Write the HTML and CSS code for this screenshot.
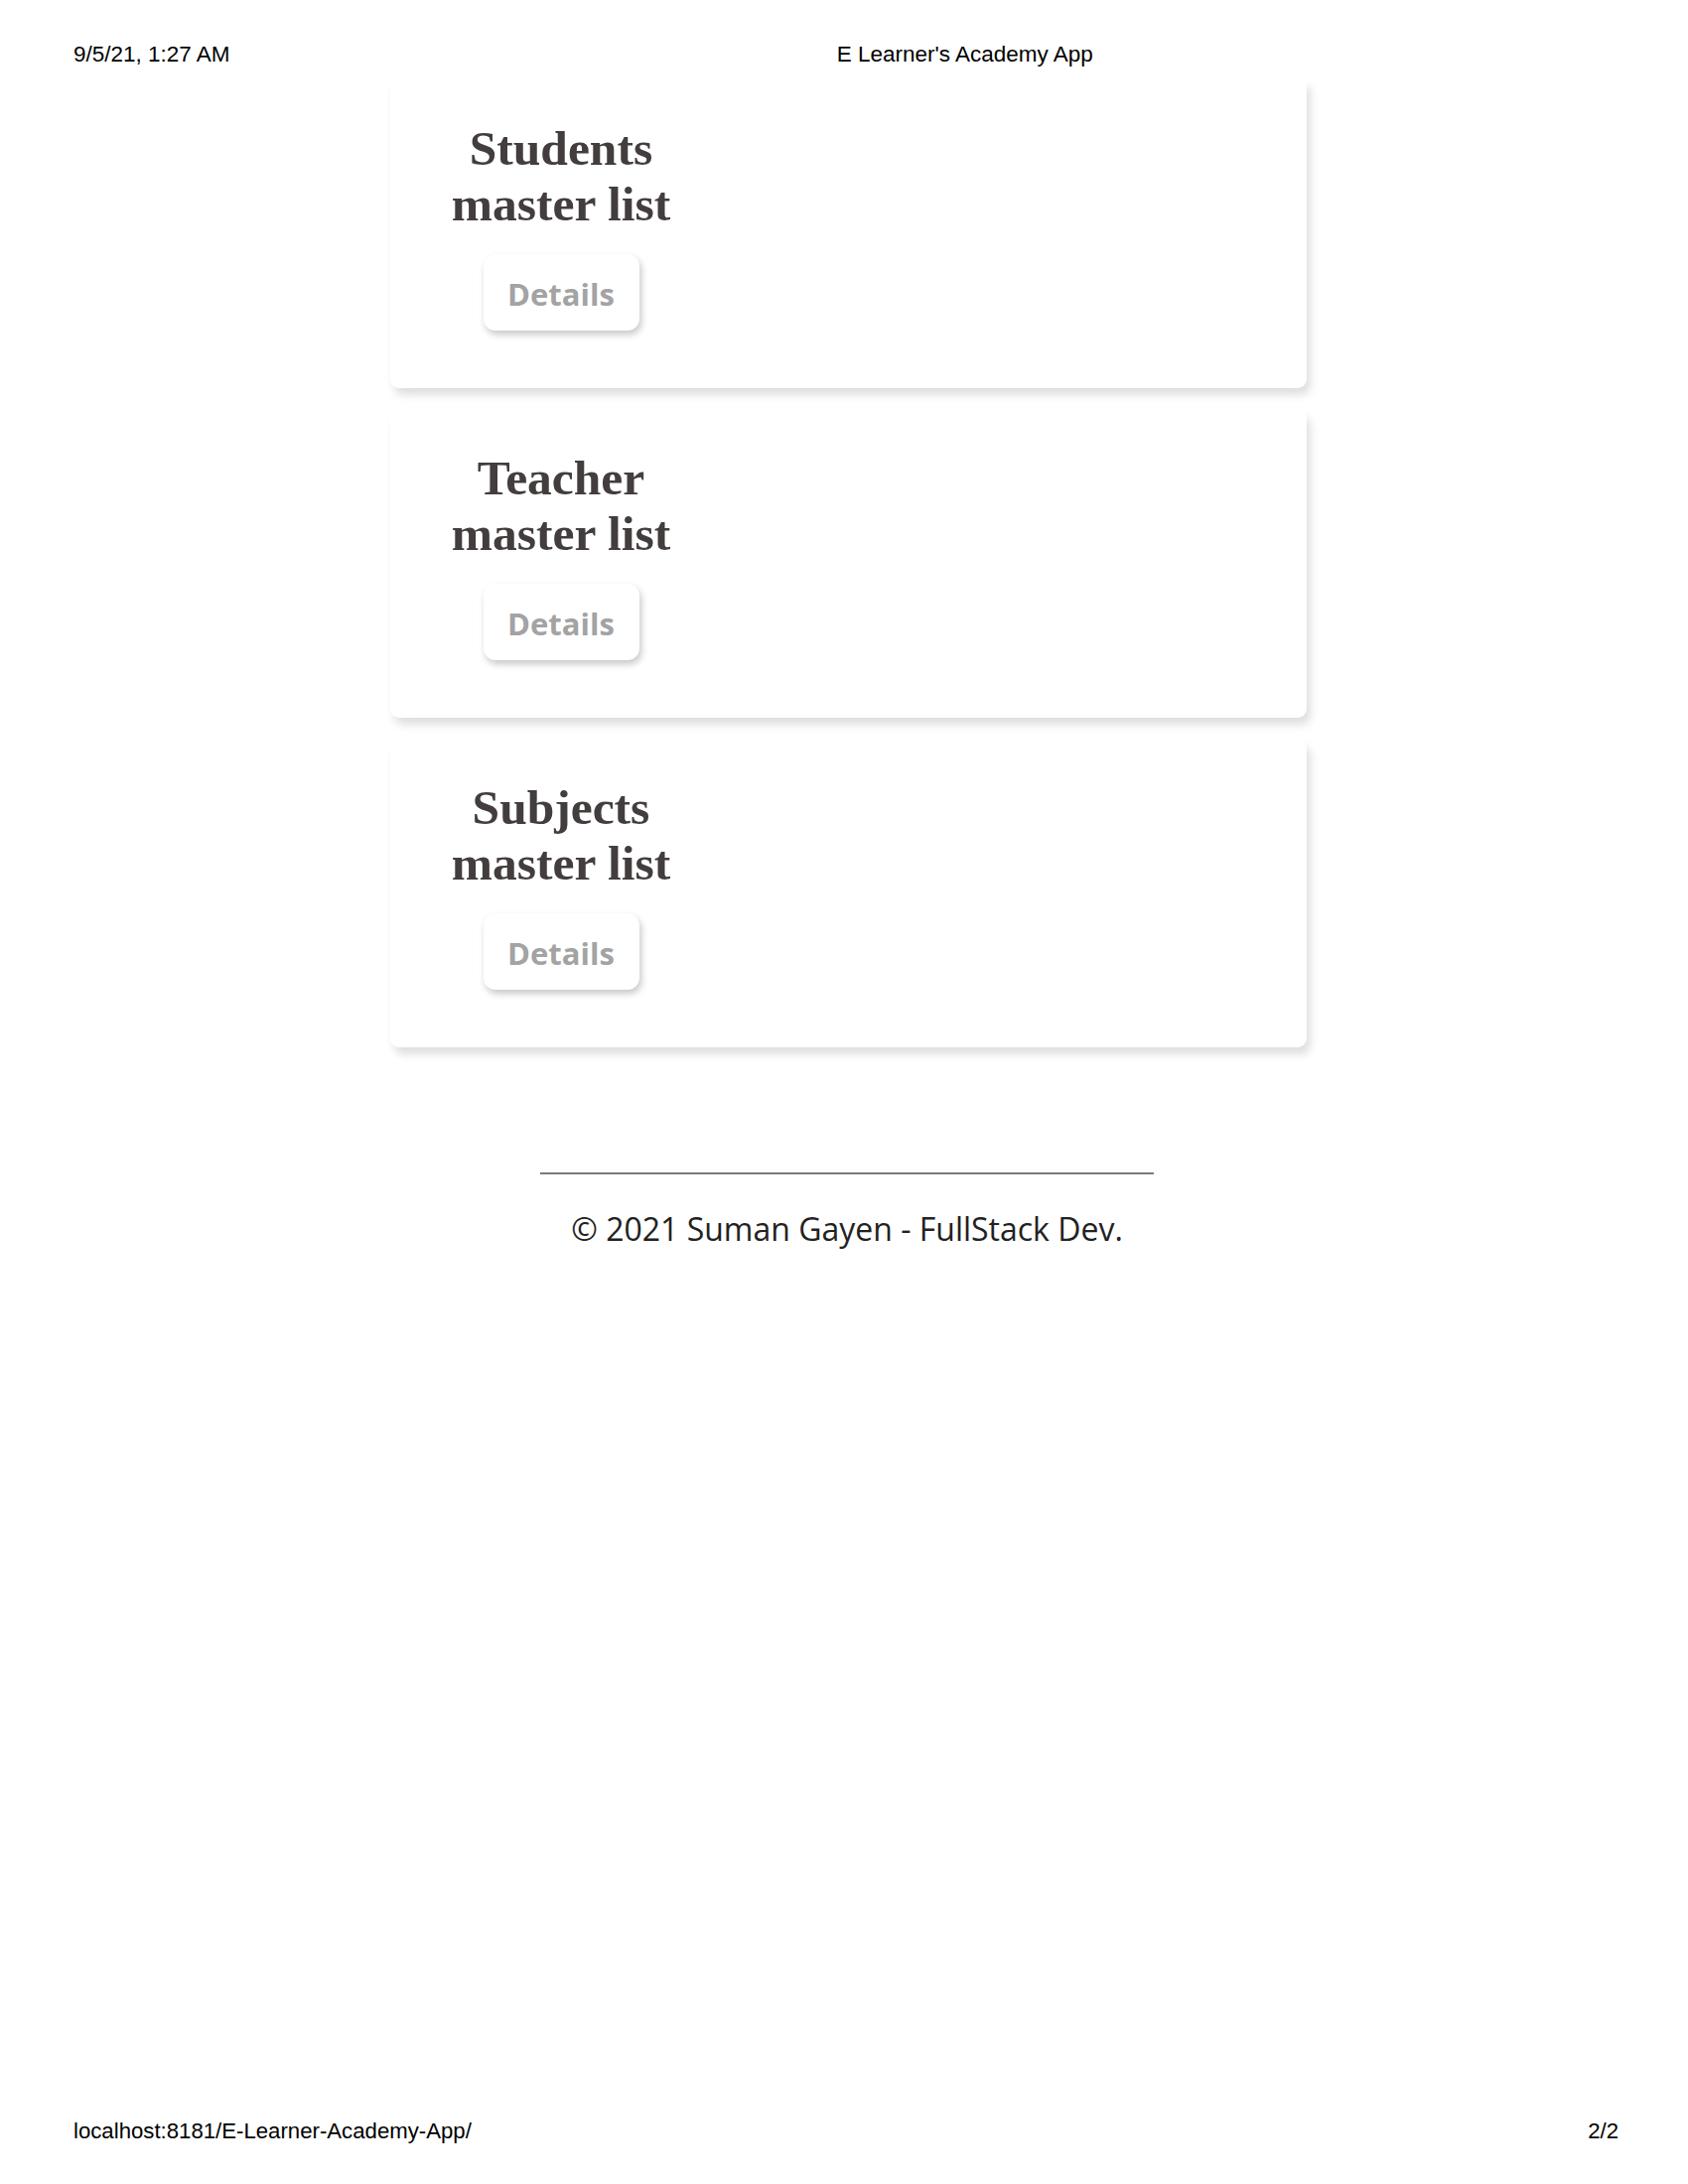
FILE: index.html
```html
<!DOCTYPE html>
<html>
<head>
<meta charset="utf-8">
<title>E Learner's Academy App</title>
<link rel="stylesheet" href="styles.css">
</head>
<body>
<div class="page">
  <div class="print-head">
    <span class="date">9/5/21, 1:27 AM</span>
    <span class="doc-title">E Learner's Academy App</span>
  </div>
  <div class="cards">
    <div class="card card-cut">
      <div class="card-col">
        <h2 class="card-title">Students master list</h2>
        <button class="details-btn">Details</button>
      </div>
    </div>
    <div class="card">
      <div class="card-col">
        <h2 class="card-title">Teacher master list</h2>
        <button class="details-btn">Details</button>
      </div>
    </div>
    <div class="card">
      <div class="card-col">
        <h2 class="card-title">Subjects master list</h2>
        <button class="details-btn">Details</button>
      </div>
    </div>
  </div>
  <footer class="site-footer">
    <div class="footer-rule"></div>
    <p class="copyright">© 2021 Suman Gayen - FullStack Dev.</p>
  </footer>
  <div class="print-foot">
    <span>localhost:8181/E-Learner-Academy-App/</span>
    <span>2/2</span>
  </div>
</div>
</body>
</html>
```

FILE: styles.css
```css
html, body {
  margin: 0;
  padding: 0;
  background: #ffffff;
}

.page {
  height: 2200px;
  display: flex;
  flex-direction: column;
  overflow: hidden;
}

.print-head {
  display: flex;
  height: 39px;
  padding: 42px 0 0 74px;
  font-family: "Liberation Sans", Arial, sans-serif;
  font-size: 22.5px;
  line-height: 26px;
  color: #000;
}

.doc-title {
  margin-left: 611px;
}

.cards {
  display: flex;
  flex-direction: column;
  gap: 22px;
  width: 923px;
  margin-left: 393px;
}

.card {
  height: 310px;
  box-sizing: border-box;
  padding: 41px 0 0 22px;
  background: #fff;
  border-radius: 9px;
  box-shadow: 4px 7px 9px rgba(0, 0, 0, 0.13);
}

.card-cut {
  border-top-left-radius: 0;
  border-top-right-radius: 0;
  clip-path: inset(0 -30px -30px -30px);
}

.card-col {
  width: 300px;
  text-align: center;
}

.card-title {
  margin: 0;
  font-family: "Liberation Serif", "Times New Roman", serif;
  font-weight: bold;
  font-size: 49.5px;
  line-height: 56px;
  color: #433d3d;
}

.details-btn {
  display: block;
  width: 157px;
  height: 77px;
  margin: 22px auto 0;
  padding: 2px 0 0;
  border: none;
  border-radius: 12px;
  background: #fff;
  box-shadow: 2px 4px 7px rgba(0, 0, 0, 0.22);
  font-family: "Open Sans", "Noto Sans", sans-serif;
  font-weight: 700;
  font-size: 31px;
  color: #a3a3a3;
}

.site-footer {
  display: flex;
  flex-direction: column;
}

.footer-rule {
  width: 618px;
  height: 2px;
  margin: 126px 0 0 544px;
  background: #7a7a7a;
}

.copyright {
  margin: 33px 0 0;
  padding-left: 6px;
  text-align: center;
  font-family: "Open Sans", "Noto Sans", sans-serif;
  font-size: 32px;
  line-height: 44px;
  color: #222;
}

.print-foot {
  display: flex;
  justify-content: space-between;
  margin-top: auto;
  padding: 0 70px 40px 74px;
  font-family: "Liberation Sans", Arial, sans-serif;
  font-size: 22.2px;
  line-height: 26px;
  color: #000;
}
```
